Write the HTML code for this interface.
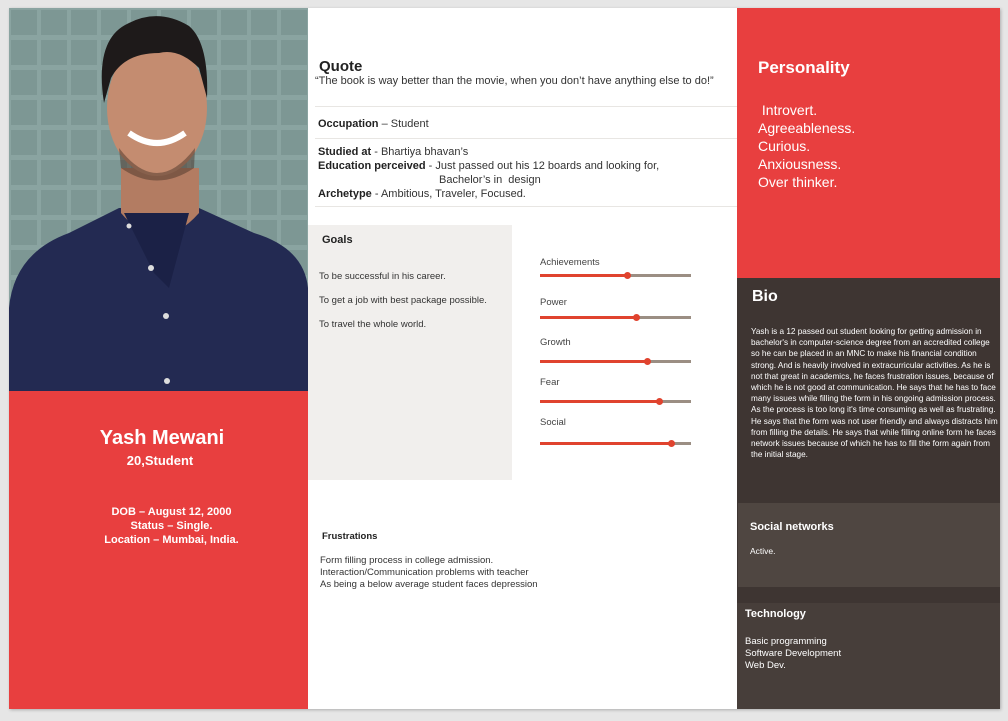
<!DOCTYPE html>
<html><head><meta charset="utf-8"><style>
*{margin:0;padding:0;box-sizing:border-box}
body{width:1008px;height:721px;background:#e6e6e6;font-family:"Liberation Sans",sans-serif;position:relative;overflow:hidden}
.a{position:absolute}
.card{left:9px;top:8px;width:991px;height:701px;background:#fff;box-shadow:1px 1px 3px rgba(0,0,0,.25)}
.mid{font-size:11px;color:#333}
.mid b{color:#222}
.hr{position:absolute;height:1px;background:#e8e6e3;left:315px;width:422px}
.sl{position:absolute;left:540px;width:151px;height:3px;background:#9b8e83}
.sl i{position:absolute;left:0;top:0;height:3px;background:#e0432e}
.sl s{position:absolute;top:-2.5px;width:7px;height:7px;border-radius:50%;background:#e0432e}
.lab{position:absolute;left:540px;font-size:9.5px;color:#444}
.w{color:#fff}
</style></head><body>
<div class="a card"></div>
<svg class="a" style="left:9px;top:8px" width="299" height="383" viewBox="0 0 299 383">
<defs><pattern id="g" width="30" height="30" patternUnits="userSpaceOnUse"><rect width="30" height="30" fill="#8aa4a1"/><rect x="2" y="2" width="26" height="25" fill="#7d9794"/></pattern></defs>
<rect width="299" height="383" fill="url(#g)"/>
<path d="M0 300 Q5 245 60 225 L110 200 L190 200 L245 225 Q295 240 299 280 L299 383 L0 383Z" fill="#232a52"/>
<path d="M112 160 L112 205 Q150 250 190 205 L190 160Z" fill="#b37c62"/>
<ellipse cx="148" cy="100" rx="50" ry="68" fill="#c48c70"/>
<path d="M95 95 Q85 30 120 15 Q150 0 180 18 Q200 35 198 90 L190 60 Q170 40 150 45 Q115 45 102 70Z" fill="#1e1a1a"/>
<path d="M120 125 Q148 145 176 125" stroke="#fff" stroke-width="6" fill="none"/>
<path d="M110 140 Q148 190 186 140 L185 160 Q148 185 112 160Z" fill="#4a3328" opacity=".5"/>
<path d="M115 205 L145 265 L160 280 L180 205" fill="#1b2146"/>
<circle cx="142" cy="260" r="3" fill="#ddd"/><circle cx="157" cy="308" r="3" fill="#ddd"/><circle cx="158" cy="373" r="3" fill="#ddd"/><circle cx="120" cy="218" r="2.5" fill="#ddd"/>
</svg>
<div class="a" style="left:9px;top:391px;width:299px;height:318px;background:#e83f3f"></div>
<div class="a w" style="left:9px;top:427px;width:306px;text-align:center;font-size:20px;font-weight:bold">Yash Mewani</div>
<div class="a w" style="left:9px;top:453px;width:302px;text-align:center;font-size:13px;font-weight:bold">20,Student</div>
<div class="a w" style="left:9px;top:505px;width:325px;text-align:center;font-size:11px;font-weight:bold;line-height:14px">DOB – August 12, 2000<br>Status – Single.<br>Location – Mumbai, India.</div>

<div class="a" style="left:319px;top:58px;font-size:15px;font-weight:bold;color:#222">Quote</div>
<div class="a mid" style="left:315px;top:75px">“The book is way better than the movie, when you don’t have anything else to do!”</div>
<div class="hr" style="top:106px"></div>
<div class="a mid" style="left:318px;top:118px"><b>Occupation</b> – Student</div>
<div class="hr" style="top:138px"></div>
<div class="a mid" style="left:318px;top:145px;line-height:14px"><b>Studied at</b> - Bhartiya bhavan’s<br><b>Education perceived</b> - Just passed out his 12 boards and looking for,<br><span style="padding-left:121px">Bachelor’s in &nbsp;design</span><br><b>Archetype</b> - Ambitious, Traveler, Focused.</div>
<div class="hr" style="top:206px"></div>

<div class="a" style="left:308px;top:225px;width:204px;height:255px;background:#f1efed"></div>
<div class="a" style="left:322px;top:234px;font-size:11px;font-weight:bold;color:#222">Goals</div>
<div class="a" style="left:319px;top:265px;font-size:9.5px;color:#333;line-height:24px">To be successful in his career.<br>To get a job with best package possible.<br>To travel the whole world.</div>

<div class="lab" style="top:257px">Achievements</div><div class="sl" style="top:274px"><i style="width:87px"></i><s style="left:84px"></s></div>
<div class="lab" style="top:297px">Power</div><div class="sl" style="top:316px"><i style="width:96px"></i><s style="left:93px"></s></div>
<div class="lab" style="top:337px">Growth</div><div class="sl" style="top:360px"><i style="width:107px"></i><s style="left:104px"></s></div>
<div class="lab" style="top:377px">Fear</div><div class="sl" style="top:400px"><i style="width:119px"></i><s style="left:116px"></s></div>
<div class="lab" style="top:417px">Social</div><div class="sl" style="top:442px"><i style="width:131px"></i><s style="left:128px"></s></div>

<div class="a" style="left:322px;top:531px;font-size:9.5px;font-weight:bold;color:#222">Frustrations</div>
<div class="a" style="left:320px;top:555px;font-size:9.5px;color:#333;line-height:12px">Form filling process in college admission.<br>Interaction/Communication problems with teacher<br>As being a below average student faces depression</div>

<div class="a" style="left:737px;top:8px;width:263px;height:270px;background:#e83f3f"></div>
<div class="a w" style="left:758px;top:58px;font-size:17px;font-weight:bold">Personality</div>
<div class="a w" style="left:758px;top:101px;font-size:14px;line-height:18px">&nbsp;Introvert.<br>Agreeableness.<br>Curious.<br>Anxiousness.<br>Over thinker.</div>
<div class="a" style="left:737px;top:278px;width:263px;height:431px;background:#3e3532"></div>
<div class="a w" style="left:752px;top:288px;font-size:16px;font-weight:bold">Bio</div>
<div class="a w" style="left:751px;top:326px;width:247px;font-size:8.2px;line-height:11.2px">Yash is a 12 passed out student looking for getting admission in bachelor's in computer-science degree from an accredited college so he can be placed in an MNC to make his financial condition strong. And is heavily involved in extracurricular activities. As he is not that great in academics, he faces frustration issues, because of which he is not good at communication. He says that he has to face many issues while filling the form in his ongoing admission process. As the process is too long it's time consuming as well as frustrating. He says that the form was not user friendly and always distracts him from filling the details. He says that while filling online form he faces network issues because of which he has to fill the form again from the initial stage.</div>
<div class="a" style="left:738px;top:503px;width:262px;height:84px;background:#4f4641"></div>
<div class="a w" style="left:750px;top:521px;font-size:11px;font-weight:bold">Social networks</div>
<div class="a w" style="left:750px;top:546px;font-size:8.5px">Active.</div>
<div class="a" style="left:737px;top:603px;width:263px;height:106px;background:#473e3a"></div>
<div class="a w" style="left:745px;top:608px;font-size:11px;font-weight:bold">Technology</div>
<div class="a w" style="left:745px;top:636px;font-size:9.5px;line-height:12px">Basic programming<br>Software Development<br>Web Dev.</div>
</body></html>
